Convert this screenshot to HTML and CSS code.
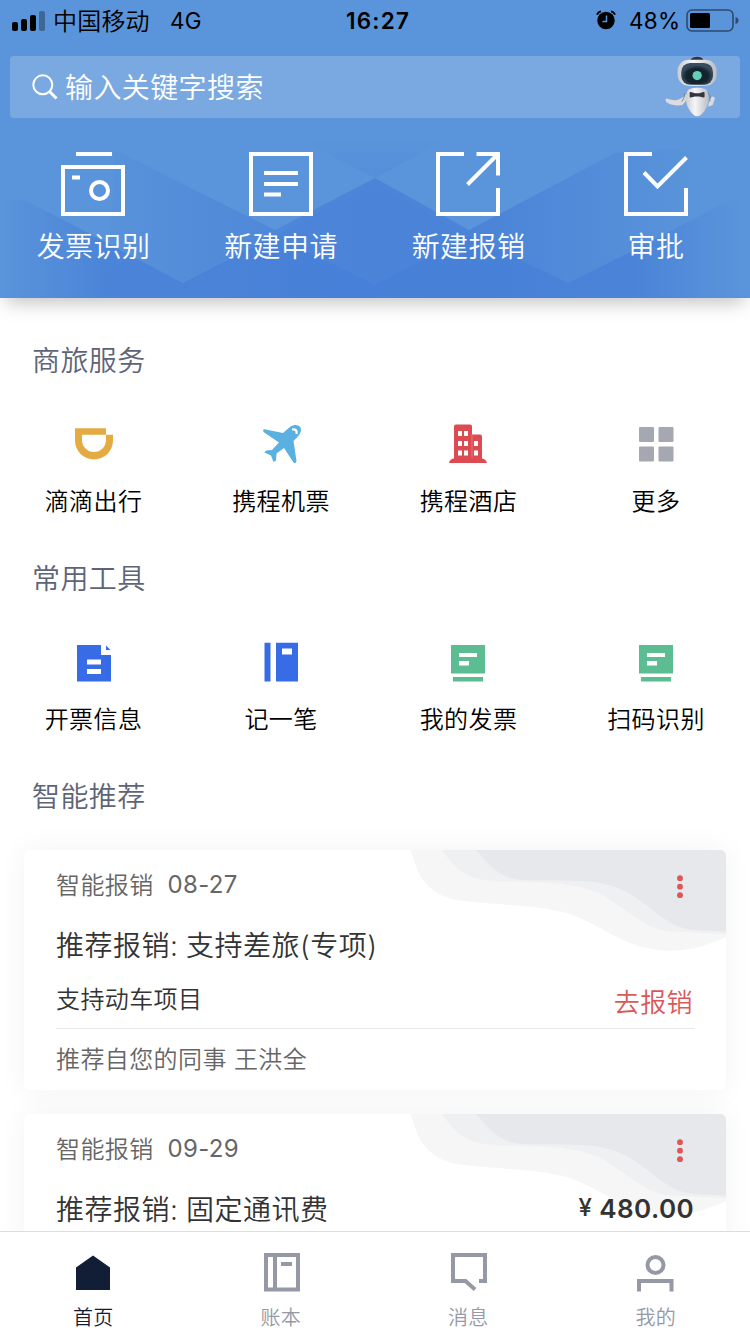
FILE: index.html
```
<!DOCTYPE html>
<html lang="zh-CN">
<head>
<meta charset="utf-8">
<title>首页</title>
<link rel="stylesheet" href="styles.css">
</head>
<body>
<div class="app">
  <header class="hero">
    <svg class="hero-bg" viewBox="0 0 750 298" aria-hidden="true">
      <defs>
        <linearGradient id="g1" gradientUnits="userSpaceOnUse" x1="100" y1="0" x2="700" y2="0">
          <stop offset="0" stop-color="#3f78d6" stop-opacity=".05"/><stop offset=".35" stop-color="#3f78d6" stop-opacity=".5"/>
          <stop offset=".65" stop-color="#3f78d6" stop-opacity=".55"/><stop offset="1" stop-color="#3f78d6" stop-opacity="0"/>
        </linearGradient>
        <linearGradient id="g2" gradientUnits="userSpaceOnUse" x1="0" y1="140" x2="0" y2="180">
          <stop offset="0" stop-color="#3f78d6" stop-opacity=".02"/><stop offset="1" stop-color="#3f78d6" stop-opacity=".2"/>
        </linearGradient>
        <linearGradient id="g3" gradientUnits="userSpaceOnUse" x1="0" y1="0" x2="107" y2="0">
          <stop offset="0" stop-color="#3f78d6" stop-opacity="0"/><stop offset="1" stop-color="#3f78d6" stop-opacity=".55"/>
        </linearGradient>
        <linearGradient id="g4" gradientUnits="userSpaceOnUse" x1="630" y1="0" x2="745" y2="0">
          <stop offset="0" stop-color="#3f78d6" stop-opacity=".5"/><stop offset="1" stop-color="#3f78d6" stop-opacity="0"/>
        </linearGradient>
        <linearGradient id="g5" gradientUnits="userSpaceOnUse" x1="107" y1="0" x2="260" y2="0">
          <stop offset="0" stop-color="#3f78d6" stop-opacity=".55"/><stop offset="1" stop-color="#3f78d6" stop-opacity=".4"/>
        </linearGradient>
        <linearGradient id="g6" gradientUnits="userSpaceOnUse" x1="500" y1="0" x2="636" y2="0">
          <stop offset="0" stop-color="#3f78d6" stop-opacity=".35"/><stop offset="1" stop-color="#3f78d6" stop-opacity=".5"/>
        </linearGradient>
      </defs>
      <path d="M115 150 275 230 375 178 469 230 615 153 700 150V298H107Z" fill="url(#g1)"/>
      <path d="M300 140 375 178 446 140Z" fill="url(#g2)"/>
      <path d="M25 200 107 243V298H0V200Z" fill="url(#g3)"/>
      <path d="M107 243 183 283 275 236 375 285V298H107Z" fill="url(#g5)"/>
      <path d="M375 285 469 236 568 283 636 249V298H375Z" fill="url(#g6)"/>
      <path d="M275 236 375 285 469 236 375 184Z" fill="#3f78d6" opacity=".08"/>
      <path d="M636 249 720 205 750 195V298H636Z" fill="url(#g4)"/>
    </svg>
    <div class="status">
      <svg class="signal" width="34" height="22" viewBox="0 0 34 22"><rect y="11" width="6" height="9" rx="2"/><rect x="9" y="8" width="6" height="12" rx="2"/><rect x="18" y="4" width="6" height="16" rx="2"/><rect x="27" width="6" height="20" rx="2" opacity=".3"/></svg>
      <span class="carrier">中国移动</span>
      <span class="network">4G</span>
      <span class="time">16:27</span>
      <svg class="alarm" width="20" height="20" viewBox="0 0 20 20"><circle cx="10" cy="10.500" r="8.700"/><path d="M1 4.800Q2 1.700 5 1.300M19 4.800Q18 1.700 15 1.300" fill="none" stroke="#000" stroke-width="1.800"/><path d="M10.500 5.500V11.500H6.500" fill="none" stroke="#5a94da" stroke-width="1.500"/></svg>
      <span class="percent">48%</span>
      <svg class="battery" width="53" height="24" viewBox="0 0 53 24"><rect x="1" y="1" width="46" height="21" rx="5" fill="none" stroke="#000" stroke-opacity=".5" stroke-width="1.600"/><rect x="4" y="4" width="20" height="15" rx="1.500"/><path d="M49.500 8Q52.500 9 52.500 11.500T49.500 15Z" opacity=".5"/></svg>
    </div>
    <div class="search">
      <svg class="search-icon" width="26" height="26" viewBox="0 0 26 26" fill="none" stroke="#fff"><circle cx="10.800" cy="10.800" r="9.500" stroke-width="2"/><path d="m17 17 7.500 7.500" stroke-width="3"/></svg>
      <span>输入关键字搜索</span>
      <svg class="robot" width="53" height="61" viewBox="870 168 160 184">
        <defs><radialGradient id="face" cx=".5" cy=".6"><stop offset="0" stop-color="#0c2028"/><stop offset=".7" stop-color="#14252e"/><stop offset="1" stop-color="#3a4d60"/></radialGradient>
        <linearGradient id="body"><stop offset="0" stop-color="#c9ccd1"/><stop offset=".4" stop-color="#f6f6f8"/><stop offset="1" stop-color="#babdc4"/></linearGradient></defs>
        <path d="M948 190V178Q953 170 967 170T985 178V190Z" fill="#35313f"/>
        <path d="M925 292Q912 303 893 301L874 296C864 305 885 322 922 316Q936 306 936 282Z" fill="#dcdbdd"/>
        <path d="M930 280Q929 296 921 305" stroke="#7c8290" stroke-width="3" fill="none"/>
        <path d="M1004 300 1012 290Q1022 290 1020 298L1014 316 1000 321Z" fill="#dadbdf"/>
        <path d="M1000 278Q1010 290 1005 306" stroke="#7c8290" stroke-width="3" fill="none"/>
        <rect x="908" y="179" width="118" height="79" rx="34" fill="url(#body)"/>
        <rect x="919" y="189" width="96" height="66" rx="27" fill="url(#face)"/>
        <circle cx="967" cy="227" r="14" fill="#65cdb9"/>
        <path d="M942 268Q967 260 994 268C1010 291 1000 327 979 345Q967 355 956 345C932 325 925 286 942 268Z" fill="url(#body)"/>
        <path d="M947 279 960 283H974L987 279V291L974 288H960L947 291Z" fill="#343540" stroke="#343540" stroke-width="5" stroke-linejoin="round"/>
      </svg>
    </div>
    <nav class="actions">
      <a class="action"><svg width="64" height="64" viewBox="0 0 64 64" fill="none" stroke="#fff" stroke-width="4"><path d="M15 2H51M2 15H62V62H2ZM11 25.500H19"/><circle cx="38.500" cy="38.500" r="8.500"/></svg><span>发票识别</span></a>
      <a class="action"><svg width="64" height="64" viewBox="0 0 64 64" fill="none" stroke="#fff" stroke-width="4"><path d="M2 2H62V62H2ZM15 21H49M15 32H49M15 42.500H32"/></svg><span>新建申请</span></a>
      <a class="action"><svg width="64" height="64" viewBox="0 0 64 64" fill="none" stroke="#fff" stroke-width="4"><path d="M28 2H2V62H62V36M40.500 2H62V23.500M61 3 31.500 32.500"/></svg><span>新建报销</span></a>
      <a class="action"><svg width="64" height="64" viewBox="0 0 64 64" fill="none" stroke="#fff" stroke-width="4"><path d="M28 2H2V62H62V36M20 20.500 33.500 34.500 62.500 5.500"/></svg><span>审批</span></a>
    </nav>
  </header>

  <main class="content">
    <section class="group">
      <h2 class="group-title">商旅服务</h2>
      <div class="tools">
        <a class="tool"><svg width="40" height="40" viewBox="0 0 40 40"><path fill="#e5ab43" fill-rule="evenodd" d="M2 4.300H33V10.800H40V16.500A19 19 0 0 1 2 16.500ZM9 10.800V16A12 12 0 0 0 33 16V10.800Z"/></svg><span>滴滴出行</span></a>
        <a class="tool"><svg width="40" height="40" viewBox="0 0 40 40"><path fill="#5bb0e2" d="M3.500 5.300 22 9 29.500 2.500C33 0 38 .5 39.500 3.500C41 7.500 39 11 32.500 17L35.500 37Q35 40 32.500 38.500L23 24 15.500 29.500 15 36.500 12.500 38 10 31.500 3.500 28.500 5 26.500 11 26 18 18.500 2.500 8Q1.500 5 3.500 5.300Z"/><path d="M31 5.500Q36.500 4.500 35.500 10" fill="none" stroke="#fff" stroke-width="2.200"/></svg><span>携程机票</span></a>
        <a class="tool"><svg width="40" height="40" viewBox="0 0 40 40"><path fill="#dc4b51" d="M1 39Q2 34.500 6 34.500V2.500Q6 .5 8 .5H22Q24 .5 24 2.500V10.500H32Q34 10.500 34 12.500V34.500Q38 35 39 39Z"/><path fill="#fff" d="M10 7h4v5h-4zm6 0h4v5h-4zM10 17h4v5h-4zm6 0h4v5h-4zm10 0h4v5h-4zM10 26.500h4v5h-4zm6 0h4v5h-4zm10 0h4v5h-4z"/><path d="M24 10V34" stroke="#e98a8e" stroke-width=".7"/></svg><span>携程酒店</span></a>
        <a class="tool"><svg width="40" height="40" viewBox="0 0 40 40" fill="#a5a8b1"><rect x="3" y="3" width="15" height="15" rx="1"/><rect x="22.500" y="3" width="15" height="15" rx="1"/><rect x="3" y="22.500" width="15" height="15" rx="1"/><rect x="22.500" y="22.500" width="15" height="15" rx="1"/></svg><span>更多</span></a>
      </div>
    </section>
    <section class="group">
      <h2 class="group-title">常用工具</h2>
      <div class="tools">
        <a class="tool"><svg width="40" height="40" viewBox="0 0 40 40" fill="#386be6"><path fill-rule="evenodd" d="M4 3H28V13H38V39.500H4ZM14 17.500V22.500H28V17.500ZM14 27V32H28V27Z"/><path d="M33 3.500V8H37.500Z"/></svg><span>开票信息</span></a>
        <a class="tool"><svg width="40" height="40" viewBox="0 0 40 40" fill="#386be6"><path fill-rule="evenodd" d="M3.500 .7H9.500V39.500H3.500ZM15 .7H37V39.500H15ZM21 6.500V12.500H31V6.500Z"/></svg><span>记一笔</span></a>
        <a class="tool"><svg width="40" height="40" viewBox="0 0 40 40" fill="#5bbd91"><path fill-rule="evenodd" d="M3 3H37V31.500H3ZM11 11V15H29V11ZM11 19V23.500H21V19ZM5 35H35V39.500H5Z"/></svg><span>我的发票</span></a>
        <a class="tool"><svg width="40" height="40" viewBox="0 0 40 40" fill="#5bbd91"><path fill-rule="evenodd" d="M3 3H37V31.500H3ZM11 11V15H29V11ZM11 19V23.500H21V19ZM5 35H35V39.500H5Z"/></svg><span>扫码识别</span></a>
      </div>
    </section>
    <section class="group">
      <h2 class="group-title">智能推荐</h2>
      <div class="cards">
        <article class="card">
          <svg class="wave" width="316" height="102" viewBox="105 60 948 306"><path fill="#f6f6f7" d="M108 60C125 130 155 205 270 213C400 228 440 220 560 245C680 275 740 362 890 362C960 362 1010 340 1053 322V60Z"/><path fill="#eff0f2" d="M200 60C230 100 260 145 340 151C470 160 560 150 660 185C740 215 800 310 920 306L1053 312V60Z"/><path fill="#e7e8ec" d="M303 60C340 100 370 145 440 150C560 155 640 145 710 168C810 195 860 295 960 300L1053 305V60Z"/></svg>
          <div class="card-meta"><span>智能报销</span><span class="date">08-27</span><svg class="more" width="6" height="24" viewBox="0 0 6 24" fill="#dd5658"><circle cx="3" cy="3.200" r="2.900"/><circle cx="3" cy="11.700" r="2.900"/><circle cx="3" cy="20.200" r="2.900"/></svg></div>
          <div class="card-title"><span>推荐报销: 支持差旅(专项)</span></div>
          <div class="card-detail"><span>支持动车项目</span><a class="go">去报销</a></div>
          <div class="card-source">推荐自您的同事 王洪全</div>
        </article>
        <article class="card">
          <svg class="wave" width="316" height="102" viewBox="105 60 948 306"><path fill="#f6f6f7" d="M108 60C125 130 155 205 270 213C400 228 440 220 560 245C680 275 740 362 890 362C960 362 1010 340 1053 322V60Z"/><path fill="#eff0f2" d="M200 60C230 100 260 145 340 151C470 160 560 150 660 185C740 215 800 310 920 306L1053 312V60Z"/><path fill="#e7e8ec" d="M303 60C340 100 370 145 440 150C560 155 640 145 710 168C810 195 860 295 960 300L1053 305V60Z"/></svg>
          <div class="card-meta"><span>智能报销</span><span class="date">09-29</span><svg class="more" width="6" height="24" viewBox="0 0 6 24" fill="#dd5658"><circle cx="3" cy="3.200" r="2.900"/><circle cx="3" cy="11.700" r="2.900"/><circle cx="3" cy="20.200" r="2.900"/></svg></div>
          <div class="card-title"><span>推荐报销: 固定通讯费</span><span class="amount"><span class="yen">¥</span>480.00</span></div>
        </article>
      </div>
    </section>
  </main>

  <nav class="tabbar">
    <a class="tab active"><svg width="40" height="40" viewBox="0 0 40 40"><path fill="#121d36" d="M20 2.500 37 14.500V37H3V14.500Z"/></svg><span>首页</span></a>
    <a class="tab"><svg width="40" height="40" viewBox="0 0 40 40" fill="none" stroke="#9599a5" stroke-width="4"><path d="M5 2H37V36.500H5ZM14 2V36.500M20 11H31"/></svg><span>账本</span></a>
    <a class="tab"><svg width="40" height="40" viewBox="0 0 40 40" fill="none" stroke="#9599a5" stroke-width="4"><path d="M31 28H37V2H5V28H17.500L27 36.500"/></svg><span>消息</span></a>
    <a class="tab"><svg width="40" height="40" viewBox="0 0 40 40" fill="none" stroke="#9599a5" stroke-width="4"><circle cx="19.500" cy="12" r="8"/><path d="M3 38.500V28H35.500V38.500"/></svg><span>我的</span></a>
  </nav>
</div>
</body>
</html>
```
FILE: styles.css
```
* { box-sizing: border-box; }
body {
  margin: 0;
  background: #fff;
  color: #000;
  font-family: Inter, "Noto Sans CJK SC", sans-serif;
  font-weight: 350;
}
svg { display: block; flex: none; }
.app { width: 750px; height: 1334px; display: flex; flex-direction: column; overflow: hidden; }

/* Header */
.hero {
  position: relative;
  z-index: 1;
  flex: none;
  height: 298px;
  background: #5a94da;
  box-shadow: 0 10px 18px -6px rgba(0, 0, 0, .26);
}
.hero-bg { position: absolute; inset: 0; width: 750px; height: 298px; z-index: -1; }
.status {
  display: flex;
  align-items: center;
  height: 42px;
  padding-left: 12px;
  font-size: 24px;
  white-space: nowrap;
}
.signal { margin-top: 1px; }
.carrier { width: 106px; margin-left: 7px; padding-bottom: 4px; letter-spacing: .2px; }
.network { margin-left: 11px; width: 176px; padding-bottom: 1px; font-size: 22.5px; font-weight: 400; letter-spacing: .3px; }
.time { width: 250px; padding-bottom: 2px; font-size: 22.5px; font-weight: 600; letter-spacing: 1.2px; }
.alarm { margin: 0 13px 2px 0; }
.percent { width: 57px; padding-bottom: 2px; font-size: 22.5px; font-weight: 400; letter-spacing: .3px; }
.search {
  display: flex;
  align-items: center;
  height: 62px;
  margin: 14px 10px 0;
  padding-left: 22px;
  border-radius: 4px;
  background: #7aa9e1;
  color: #fff;
  font-size: 28px;
  letter-spacing: .4px;
}
.search span { padding-bottom: 3px; }
.search-icon { margin-right: 7px; }
.robot { margin: 0 22px 1px auto; }
.actions, .tools, .tabbar { display: grid; grid-template-columns: repeat(4, 187.5px); }
.actions { margin: 34px 0 0 -.75px; }
.action, .tool, .tab { display: flex; flex-direction: column; align-items: center; white-space: nowrap; }
.action { color: #fff; font-size: 28px; line-height: 32px; letter-spacing: .4px; gap: 15px; }
.action span { margin-left: 1px; }

/* Sections */
.content { flex: 1; min-height: 0; overflow: hidden; padding-top: 43px; }
.group { margin-bottom: 41px; }
.group-title {
  margin: 0;
  padding-left: 32px;
  color: #5d6478;
  font-size: 28px;
  font-weight: 350;
  line-height: 40px;
  letter-spacing: .4px;
}
.tools { margin: 43px 0 0 -.75px; }
.tool { gap: 22px; font-size: 24px; line-height: 32px; letter-spacing: .4px; }
.tool span { margin-left: 1px; }

/* Recommendation cards */
.cards { display: flex; flex-direction: column; gap: 24px; padding: 33px 24px 0; }
.card {
  position: relative;
  height: 240px;
  padding: 18px 31px 0 32px;
  border-radius: 6px;
  background: #fff;
  box-shadow: 0 0 30px rgba(0, 0, 0, .055);
  color: #666;
  font-size: 24px;
  letter-spacing: .4px;
  white-space: nowrap;
}
.wave { position: absolute; top: 0; right: 0; border-top-right-radius: 6px; }
.card-meta, .card-title, .card-detail { position: relative; display: flex; align-items: center; }
.card-meta { height: 34px; }
.card-meta span:first-child { padding-bottom: 4px; }
.date { margin-left: 14px; padding-bottom: 1px; font-weight: 400; letter-spacing: .3px; }
.more { margin: 4px 12px 0 auto; }
.card-title { height: 40px; margin-top: 22px; color: #333; font-size: 28px; letter-spacing: .5px; word-spacing: -.7px; justify-content: space-between; }
.card-detail { height: 65px; padding-top: 2px; color: #333; justify-content: space-between; border-bottom: 1px solid #e8e8e8; }
.go { margin: 6px 2px 0 0; color: #db5859; font-size: 26px; }
.card-source { line-height: 62px; }
.amount { display: flex; gap: 7px; margin-right: 1px; font-size: 26px; font-weight: 600; letter-spacing: .4px; }
.yen { font-size: 24px; font-weight: 500; }

/* Bottom tabs */
.tabbar { flex: none; height: 103px; padding-top: 21px; border-top: 1px solid #ddd; background: #fff; }
.tab { gap: 10px; color: #9599a5; font-size: 20px; line-height: 30px; letter-spacing: .3px; }
.tab svg { margin-left: -1.5px; }
.tab span { margin-left: -1px; }
.tab.active { color: #121d36; }
```
